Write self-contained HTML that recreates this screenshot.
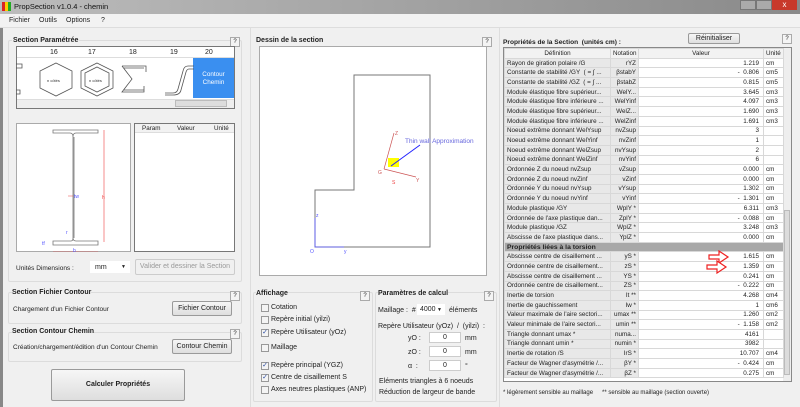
<!DOCTYPE html>
<html><head><meta charset="utf-8"><style>
*{margin:0;padding:0;box-sizing:border-box}
body{width:800px;height:407px;overflow:hidden;background:#f0f0f0;font-family:"Liberation Sans",sans-serif;font-size:7px;color:#222;position:relative}
.a{position:absolute;white-space:nowrap}
.b{font-weight:bold}
.grp{position:absolute;border:1px solid #dcdcdc;border-radius:2px}
.btn{position:absolute;border:1px solid #9a9a9a;border-radius:2px;background:linear-gradient(#f6f6f6,#dedede);text-align:center;font-size:7px}
.q{position:absolute;width:10px;height:10px;border:1px solid #aaa;background:#f4f4f4;font-size:6px;text-align:center;line-height:8px}
.cb{position:absolute;width:8px;height:8px;border:1px solid #999;background:#f4f4f4;font-size:7px;line-height:6px;text-align:center;color:#2a4aa0}
.inp{position:absolute;background:#fff;border:1px solid #ccc;text-align:center;font-size:7px}
table{border-collapse:collapse;font-size:6.3px;table-layout:fixed}
td{height:9.7px;border:1px solid #d8d8d8;padding:0 2px;white-space:nowrap;overflow:hidden}
td.d{background:#e8e8e8}
td.n{background:#e8e8e8;text-align:right}
td.v{background:#fff;text-align:right;padding-right:4px}
td.u{background:#fff}
</style></head><body>
<div class="a" style="left:0;top:0;width:800px;height:14px;background:linear-gradient(90deg,#bcbcbc,#8a8a8a)"></div>
<div class="a" style="left:2px;top:2px;width:9px;height:9px;background:linear-gradient(90deg,#d22 33%,#fc0 33% 66%,#2a2 66%)"></div>
<div class="a" style="left:14px;top:2px;font-size:7.5px;color:#111">PropSection v1.0.4 - chemin</div>
<div class="a" style="left:740px;top:0;width:16px;height:10px;background:#aaa;border:1px solid #777"></div>
<div class="a" style="left:756px;top:0;width:16px;height:10px;background:#aaa;border:1px solid #777"></div>
<div class="a" style="left:772px;top:0;width:25px;height:10px;background:#c8392b;color:#fff;text-align:center;font-size:8px;line-height:9px">x</div>
<div class="a" style="left:0;top:14px;width:800px;height:14px;background:#f2f2f2;border-bottom:1px solid #ddd"></div>
<div class="a" style="left:9px;top:17px;font-size:7px">Fichier</div>
<div class="a" style="left:39px;top:17px;font-size:7px">Outils</div>
<div class="a" style="left:66px;top:17px;font-size:7px">Options</div>
<div class="a" style="left:101px;top:17px;font-size:7px">?</div>
<div class="a" style="left:0;top:28px;width:3px;height:379px;background:#888"></div>

<div class="grp" style="left:8px;top:40px;width:234px;height:242px"></div>
<div class="a b" style="left:12px;top:37px;background:#f0f0f0;padding:0 1px">Section Paramétrée</div>
<div class="q" style="left:230px;top:37px">?</div>
<div class="a" style="left:16px;top:46px;width:219px;height:63px;border:1px solid #777;background:#fff"></div>
<div class="a" style="left:17px;top:47px;width:217px;height:11px;border-bottom:1px solid #ddd"></div>
<div class="a" style="left:50px;top:49px">16</div><div class="a" style="left:88px;top:49px">17</div><div class="a" style="left:129px;top:49px">18</div><div class="a" style="left:170px;top:49px">19</div><div class="a" style="left:205px;top:49px">20</div>
<div class="a" style="left:193px;top:58px;width:41px;height:40px;background:#3a8ff0;color:#fff;text-align:center;font-size:6.3px;padding-top:13px;line-height:8px">Contour<br>Chemin</div>
<svg class="a" style="left:16px;top:58px" width="178" height="40">
<g fill="none" stroke="#555" stroke-width="0.8">
<path d="M0 6h6v4H0M0 32h4v4H0"/>
<polygon points="40,5 56,13 56,30 40,38 24,30 24,13"/>
<polygon points="81,5 97,13 97,30 81,38 65,30 65,13"/><polygon points="81,9 93,15 93,28 81,34 69,28 69,15"/>
<path d="M106 8h24v6M106 8l10 13-10 13h22v-6M108 10h20M108 32h20"/>
<path d="M178 8h-6q-4 0-5 5l-5 18q-1 4-5 4h-8M178 11h-5q-2 0-3 3l-5 18q-1 5-8 5h-8"/>
</g>
<text x="31" y="24" font-size="4" fill="#333" font-family="Liberation Sans">n côtés</text>
<text x="73" y="24" font-size="4" fill="#333" font-family="Liberation Sans">n côtés</text>
</svg>
<div class="a" style="left:17px;top:99px;width:217px;height:9px;background:#eee;border-top:1px solid #ddd"></div>
<div class="a" style="left:175px;top:100px;width:52px;height:7px;background:#ddd;border:1px solid #bbb"></div>
<div class="a" style="left:16px;top:123px;width:115px;height:129px;border:1px solid #aaa;background:#fff"></div>
<svg class="a" style="left:16px;top:123px" width="115" height="129">
<g fill="none" stroke="#777" stroke-width="0.8">
<path d="M37 7h45v3H60q-3 0-3 4v101q0 3 3 3h22v4H37v-4h18q2 0 2-3V14q0-4-3-4H37z"/>
<path d="M58 14v101"/></g>
<g stroke="#e44" stroke-width="0.6" fill="#e44"><path d="M88 7v112M37 129h45M52 73h5"/></g>
<text x="58" y="75" font-size="5" fill="#55f">tw</text><text x="86" y="76" font-size="5" fill="#e44">h</text>
<text x="50" y="111" font-size="5" fill="#55f">r</text><text x="26" y="122" font-size="5" fill="#55f">tf</text>
<text x="57" y="129" font-size="5" fill="#55f">b</text>
</svg>
<div class="a" style="left:134px;top:123px;width:101px;height:129px;border:1px solid #777;background:#fff"></div>
<div class="a" style="left:135px;top:124px;width:99px;height:9px;background:#f2f2f2;border-bottom:1px solid #ddd;font-size:6.3px"><span class="a" style="left:7px;top:1px">Param</span><span class="a" style="left:42px;top:1px">Valeur</span><span class="a" style="left:79px;top:1px">Unité</span></div>
<div class="a" style="left:16px;top:265px;font-size:6.5px">Unités Dimensions :</div>
<div class="inp" style="left:90px;top:261px;width:40px;height:12px;text-align:left;padding-left:4px;border-color:#fff;line-height:11px">mm<span style="position:absolute;right:3px;font-size:5px">▼</span></div>
<div class="btn" style="left:135px;top:259px;width:100px;height:16px;color:#999;line-height:14px;border-color:#ccc;background:#f0f0f0">Valider et dessiner la Section</div>
<div class="grp" style="left:8px;top:292px;width:234px;height:32px"></div>
<div class="a b" style="left:12px;top:289px;background:#f0f0f0">Section Fichier Contour</div>
<div class="q" style="left:230px;top:291px">?</div>
<div class="a" style="left:13px;top:306px;font-size:6.5px">Chargement d'un Fichier Contour</div>
<div class="btn" style="left:172px;top:301px;width:60px;height:15px;line-height:13px">Fichier Contour</div>
<div class="grp" style="left:8px;top:332px;width:234px;height:30px"></div>
<div class="a b" style="left:12px;top:328px;background:#f0f0f0">Section Contour Chemin</div>
<div class="q" style="left:230px;top:329px">?</div>
<div class="a" style="left:13px;top:344px;font-size:6.5px">Création/chargement/édition d'un Contour Chemin</div>
<div class="btn" style="left:172px;top:339px;width:60px;height:15px;line-height:13px">Contour Chemin</div>
<div class="btn b" style="left:51px;top:369px;width:134px;height:32px;line-height:30px">Calculer Propriétés</div>

<div class="a" style="left:250px;top:28px;width:1px;height:379px;background:#ddd"></div>
<div class="a b" style="left:256px;top:37px">Dessin de la section</div>
<div class="q" style="left:482px;top:37px">?</div>
<div class="a" style="left:259px;top:46px;width:228px;height:230px;border:1px solid #aaa;background:#fff"></div>
<svg class="a" style="left:0;top:0" width="500" height="280">
<polygon points="354,75 430,75 430,247 315,247 315,190 354,190" fill="none" stroke="#777" stroke-width="1"/>
<path d="M315 247V218M315 247h29" stroke="#55f" stroke-width="0.8"/>
<text x="310" y="253" font-size="5" fill="#55f">O</text><text x="344" y="253" font-size="5" fill="#55f">y</text><text x="316" y="217" font-size="5" fill="#55f">z</text>
<path d="M384 169L394 133M384 169L416 177" stroke="#c55" stroke-width="0.7"/>
<rect x="388" y="158" width="11" height="9" fill="#ff0"/>
<path d="M391 166L420 145" stroke="#22f" stroke-width="1"/>
<text x="405" y="143" font-size="6.5" fill="#66d" font-family="Liberation Sans">Thin wall Approximation</text>
<text x="378" y="174" font-size="5" fill="#c55">G</text><text x="395" y="135" font-size="5" fill="#c55">Z</text><text x="416" y="182" font-size="5" fill="#c55">Y</text><text x="392" y="184" font-size="5" fill="#e44">S</text>
</svg>
<div class="grp" style="left:253px;top:292px;width:120px;height:110px"></div>
<div class="a b" style="left:256px;top:290px;background:#f0f0f0">Affichage</div>
<div class="q" style="left:360px;top:291px">?</div>
<div class="cb" style="left:261px;top:304px"></div><div class="a" style="left:271px;top:304px">Cotation</div>
<div class="cb" style="left:261px;top:316px"></div><div class="a" style="left:271px;top:316px">Repère initial (yilzi)</div>
<div class="cb" style="left:261px;top:329px">✓</div><div class="a" style="left:271px;top:329px">Repère Utilisateur (yOz)</div>
<div class="cb" style="left:261px;top:344px"></div><div class="a" style="left:271px;top:344px">Maillage</div>
<div class="cb" style="left:261px;top:362px">✓</div><div class="a" style="left:271px;top:362px">Repère principal (YGZ)</div>
<div class="cb" style="left:261px;top:374px">✓</div><div class="a" style="left:271px;top:374px">Centre de cisaillement S</div>
<div class="cb" style="left:261px;top:386px"></div><div class="a" style="left:271px;top:386px">Axes neutres plastiques (ANP)</div>
<div class="grp" style="left:375px;top:292px;width:122px;height:110px"></div>
<div class="a b" style="left:378px;top:290px;background:#f0f0f0">Paramètres de calcul</div>
<div class="q" style="left:484px;top:291px">?</div>
<div class="a" style="left:378px;top:307px">Maillage :&nbsp; #</div>
<div class="inp" style="left:417px;top:304px;width:28px;height:11px;text-align:left;padding-left:2px;line-height:10px;border-color:#fff">4000<span style="position:absolute;right:2px;font-size:5px">▼</span></div>
<div class="a" style="left:449px;top:307px">éléments</div>
<div class="a" style="left:378px;top:323px">Repère Utilisateur (yOz)&nbsp; /&nbsp; (yilzi)&nbsp; :</div>
<div class="a" style="left:408px;top:335px">yO :</div><div class="inp" style="left:429px;top:332px;width:32px;height:11px;line-height:10px">0</div><div class="a" style="left:465px;top:335px">mm</div>
<div class="a" style="left:408px;top:349px">zO :</div><div class="inp" style="left:429px;top:346px;width:32px;height:11px;line-height:10px">0</div><div class="a" style="left:465px;top:349px">mm</div>
<div class="a" style="left:408px;top:363px">α&nbsp; :</div><div class="inp" style="left:429px;top:360px;width:32px;height:11px;line-height:10px">0</div><div class="a" style="left:465px;top:363px">°</div>
<div class="a" style="left:379px;top:378px">Eléments triangles à 6 noeuds</div>
<div class="a" style="left:379px;top:389px">Réduction de largeur de bande</div>

<div class="a" style="left:499px;top:28px;width:1px;height:379px;background:#ddd"></div>
<div class="a b" style="left:503px;top:39px;font-size:6.6px">Propriétés de la Section&nbsp; (unités cm) :</div>
<div class="btn" style="left:688px;top:33px;width:52px;height:11px;line-height:9px">Réinitialiser</div>
<div class="q" style="left:782px;top:34px">?</div>
<div class="a" style="left:503px;top:47px;width:289px;height:335px;border:1px solid #888;background:#fff"></div>
<div class="a" style="left:783px;top:48px;width:8px;height:333px;background:#eee"></div>
<div class="a" style="left:784px;top:210px;width:6px;height:165px;background:#dcdcdc;border:1px solid #bbb"></div>
<table class="a" style="left:504px;top:48px;width:279px">
<colgroup><col style="width:106px"><col style="width:28px"><col style="width:125px"><col style="width:20px"></colgroup>
<tr style="background:#f2f2f2"><td style="text-align:center">Définition</td><td>Notation</td><td style="text-align:center">Valeur</td><td>Unité</td></tr>
<tr><td class="d">Rayon de giration polaire /G</td><td class="n">rYZ</td><td class="v">1.219</td><td class="u">cm</td></tr>
<tr><td class="d">Constante de stabilité /GY&nbsp; ( = ∫ ...</td><td class="n">βstabY</td><td class="v">-&nbsp; 0.806</td><td class="u">cm5</td></tr>
<tr><td class="d">Constante de stabilité /GZ&nbsp; ( = ∫ ...</td><td class="n">βstabZ</td><td class="v">0.815</td><td class="u">cm5</td></tr>
<tr><td class="d">Module élastique fibre supérieur...</td><td class="n">WelY...</td><td class="v">3.645</td><td class="u">cm3</td></tr>
<tr><td class="d">Module élastique fibre inférieure ...</td><td class="n">WelYinf</td><td class="v">4.097</td><td class="u">cm3</td></tr>
<tr><td class="d">Module élastique fibre supérieur...</td><td class="n">WelZ...</td><td class="v">1.690</td><td class="u">cm3</td></tr>
<tr><td class="d">Module élastique fibre inférieure ...</td><td class="n">WelZinf</td><td class="v">1.691</td><td class="u">cm3</td></tr>
<tr><td class="d">Noeud extrême donnant WelYsup</td><td class="n">nvZsup</td><td class="v">3</td><td class="u"></td></tr>
<tr><td class="d">Noeud extrême donnant WelYinf</td><td class="n">nvZinf</td><td class="v">1</td><td class="u"></td></tr>
<tr><td class="d">Noeud extrême donnant WelZsup</td><td class="n">nvYsup</td><td class="v">2</td><td class="u"></td></tr>
<tr><td class="d">Noeud extrême donnant WelZinf</td><td class="n">nvYinf</td><td class="v">6</td><td class="u"></td></tr>
<tr><td class="d">Ordonnée Z du noeud nvZsup</td><td class="n">vZsup</td><td class="v">0.000</td><td class="u">cm</td></tr>
<tr><td class="d">Ordonnée Z du noeud nvZinf</td><td class="n">vZinf</td><td class="v">0.000</td><td class="u">cm</td></tr>
<tr><td class="d">Ordonnée Y du noeud nvYsup</td><td class="n">vYsup</td><td class="v">1.302</td><td class="u">cm</td></tr>
<tr><td class="d">Ordonnée Y du noeud nvYinf</td><td class="n">vYinf</td><td class="v">-&nbsp; 1.301</td><td class="u">cm</td></tr>
<tr><td class="d">Module plastique /GY</td><td class="n">WplY *</td><td class="v">6.311</td><td class="u">cm3</td></tr>
<tr><td class="d">Ordonnée de l'axe plastique dan...</td><td class="n">ZplY *</td><td class="v">-&nbsp; 0.088</td><td class="u">cm</td></tr>
<tr><td class="d">Module plastique /GZ</td><td class="n">WplZ *</td><td class="v">3.248</td><td class="u">cm3</td></tr>
<tr><td class="d">Abscisse de l'axe plastique dans...</td><td class="n">YplZ *</td><td class="v">0.000</td><td class="u">cm</td></tr>
<tr><td colspan="4" style="background:#a8a8a8;font-weight:bold;font-size:6.8px">Propriétés liées à la torsion</td></tr>
<tr><td class="d">Abscisse centre de cisaillement ...</td><td class="n">yS *</td><td class="v">1.615</td><td class="u">cm</td></tr>
<tr><td class="d">Ordonnée centre de cisaillement...</td><td class="n">zS *</td><td class="v">1.359</td><td class="u">cm</td></tr>
<tr><td class="d">Abscisse centre de cisaillement ...</td><td class="n">YS *</td><td class="v">0.241</td><td class="u">cm</td></tr>
<tr><td class="d">Ordonnée centre de cisaillement...</td><td class="n">ZS *</td><td class="v">-&nbsp; 0.222</td><td class="u">cm</td></tr>
<tr><td class="d">Inertie de torsion</td><td class="n">It **</td><td class="v">4.268</td><td class="u">cm4</td></tr>
<tr><td class="d">Inertie de gauchissement</td><td class="n">Iw *</td><td class="v">1</td><td class="u">cm6</td></tr>
<tr><td class="d">Valeur maximale de l'aire sectori...</td><td class="n">umax **</td><td class="v">1.260</td><td class="u">cm2</td></tr>
<tr><td class="d">Valeur minimale de l'aire sectori...</td><td class="n">umin **</td><td class="v">-&nbsp; 1.158</td><td class="u">cm2</td></tr>
<tr><td class="d">Triangle donnant umax *</td><td class="n">numa...</td><td class="v">4161</td><td class="u"></td></tr>
<tr><td class="d">Triangle donnant umin *</td><td class="n">numin *</td><td class="v">3982</td><td class="u"></td></tr>
<tr><td class="d">Inertie de rotation /S</td><td class="n">IrS *</td><td class="v">10.707</td><td class="u">cm4</td></tr>
<tr><td class="d">Facteur de Wagner d'asymétrie /...</td><td class="n">βY *</td><td class="v">-&nbsp; 0.424</td><td class="u">cm</td></tr>
<tr><td class="d">Facteur de Wagner d'asymétrie /...</td><td class="n">βZ *</td><td class="v">0.275</td><td class="u">cm</td></tr>
</table>
<svg class="a" style="left:705px;top:250px" width="40" height="25">
<path d="M4 5h10v-4l9 6-9 6v-4H4z" fill="#fff" stroke="#e22" stroke-width="1.2"/>
<path d="M2 15h10v-4l9 6-9 6v-4H2z" fill="#fff" stroke="#e22" stroke-width="1.2"/>
</svg>
<div class="a" style="left:503px;top:390px;font-size:6px">* légèrement sensible au maillage</div>
<div class="a" style="left:602px;top:390px;font-size:6px">** sensible au maillage (section ouverte)</div>
</body></html>
